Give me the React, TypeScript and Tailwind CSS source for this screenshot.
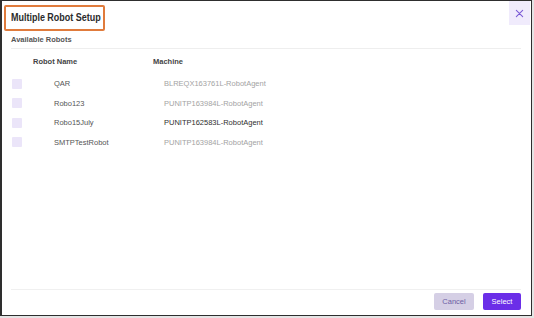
import React from "react";

const robots = [
  { name: "QAR", machine: "BLREQX163761L-RobotAgent", dark: false },
  { name: "Robo123", machine: "PUNITP163984L-RobotAgent", dark: false },
  { name: "Robo15July", machine: "PUNITP162583L-RobotAgent", dark: true },
  { name: "SMTPTestRobot", machine: "PUNITP163984L-RobotAgent", dark: false },
];

const App = () => {
  return (
    <div className="w-[534px] h-[318px] bg-[#e4e4e4] font-['Liberation_Sans',Arial,sans-serif]">
      <div className="w-[532px] h-[316px] bg-white border border-l-2 border-[#2e2e2e] flex flex-col">
        {/* Header */}
        <div className="flex justify-between">
          <div className="mt-[4px] ml-[2px] w-[101px] h-[26px] pl-[5px] border-2 border-[#e07b3c] rounded-[2px] flex items-center overflow-hidden">
            {/* condensed title: no narrow font installed, so squeeze it */}
            <span className="inline-block whitespace-nowrap origin-left scale-x-[0.78] text-[11.5px] font-bold text-[#2b2b2b]">
              Multiple Robot Setup
            </span>
          </div>
          <button className="w-[21px] h-[24px] mr-[1px] bg-[#f0ebfc] flex items-center justify-center">
            <svg width="9" height="9" viewBox="0 0 10 10" fill="none">
              <path d="M1.5 1.5 L8.5 8.5 M8.5 1.5 L1.5 8.5" stroke="#7b5bd6" strokeWidth="1.2" strokeLinecap="round" />
            </svg>
          </button>
        </div>

        <div className="pl-[9px] pr-[10px] flex flex-col flex-1">
          <div className="mt-[4px] h-[10px] leading-[10px] text-[7.5px] font-semibold text-[#555]">
            Available Robots
          </div>
          <div className="mt-[3px] h-px bg-[#eeeeee]" />

          {/* Table header */}
          <div className="mt-[8px] h-[10px] flex items-center text-[7.5px] font-semibold text-[#444]">
            <span className="ml-[22px] w-[120px]">Robot Name</span>
            <span>Machine</span>
          </div>

          {/* Rows */}
          <div className="mt-[7px] flex flex-col">
            {robots.map((r) => (
              <div key={r.name} className="h-[19.5px] flex items-center text-[7.5px]">
                <span className="ml-[1px] w-[10px] h-[10px] rounded-[1px] bg-[#ebe5f9]" />
                <span className="ml-[32px] w-[110px] text-[#555555]">{r.name}</span>
                <span className={r.dark ? "text-[#2e2e2e]" : "text-[#a3a3a3]"}>{r.machine}</span>
              </div>
            ))}
          </div>

          <div className="flex-1" />
          <div className="h-px bg-[#f0f0f0]" />
          <div className="mt-[3px] mb-[5px] flex justify-end gap-[9px]">
            <button className="w-[40px] h-[17px] rounded-[2px] bg-[#d5cfe5] text-[7.5px] text-[#6d5ea4] flex items-center justify-center">
              Cancel
            </button>
            <button className="w-[38px] h-[17px] rounded-[2px] bg-[#6b2ee8] text-[7.5px] text-white flex items-center justify-center">
              Select
            </button>
          </div>
        </div>
      </div>
    </div>
  );
};

export default App;
